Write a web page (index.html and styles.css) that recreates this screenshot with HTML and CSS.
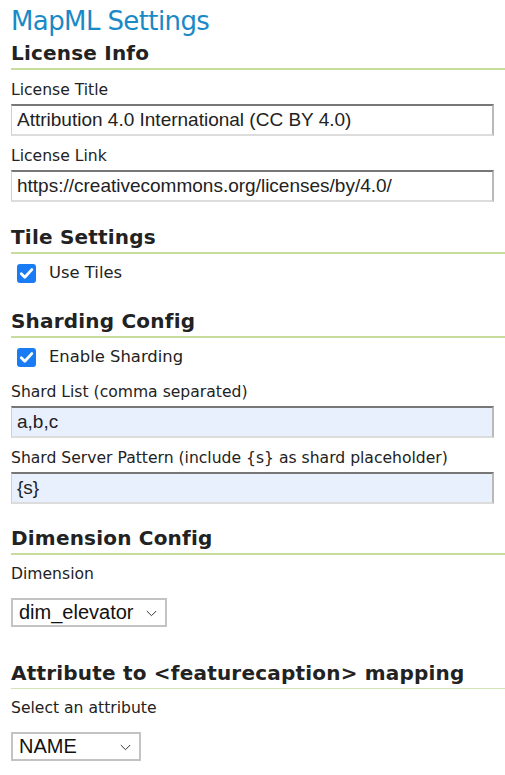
FILE: index.html
```html
<!DOCTYPE html>
<html lang="en">
<head>
<meta charset="utf-8">
<title>MapML Settings</title>
<link rel="stylesheet" href="styles.css">
</head>
<body>
<div class="page">
  <h1 class="title">MapML Settings</h1>

  <h2 class="section">License Info</h2>
  <label class="label">License Title</label>
  <input class="field" type="text" value="Attribution 4.0 International (CC BY 4.0)">
  <label class="label gap">License Link</label>
  <input class="field" type="text" value="https://creativecommons.org/licenses/by/4.0/">

  <h2 class="section sec-tile">Tile Settings</h2>
  <div class="check-row">
    <span class="check"><svg width="19" height="19" viewBox="0 0 19 19"><rect x="0" y="0" width="19" height="19" rx="3" fill="#1a7cf5"/><path d="M4.3 9.8 L7.8 13.3 L14.8 5.6" fill="none" stroke="#fff" stroke-width="2.8" stroke-linecap="round" stroke-linejoin="round"/></svg></span>
    <span class="check-text">Use Tiles</span>
  </div>

  <h2 class="section sec-shard">Sharding Config</h2>
  <div class="check-row">
    <span class="check"><svg width="19" height="19" viewBox="0 0 19 19"><rect x="0" y="0" width="19" height="19" rx="3" fill="#1a7cf5"/><path d="M4.3 9.8 L7.8 13.3 L14.8 5.6" fill="none" stroke="#fff" stroke-width="2.8" stroke-linecap="round" stroke-linejoin="round"/></svg></span>
    <span class="check-text">Enable Sharding</span>
  </div>
  <label class="label after-check">Shard List (comma separated)</label>
  <input class="field filled" type="text" value="a,b,c">
  <label class="label gap">Shard Server Pattern (include {s} as shard placeholder)</label>
  <input class="field filled" type="text" value="{s}">

  <h2 class="section sec-dim">Dimension Config</h2>
  <label class="label sel-label">Dimension</label>
  <div class="select select-dim">
    <span class="select-value">dim_elevator</span>
    <svg class="chev" width="11" height="7" viewBox="0 0 11 7"><path d="M0.8 1 L5.5 5.7 L10.2 1" fill="none" stroke="#333" stroke-width="1"/></svg>
  </div>

  <h2 class="section sec-attr">Attribute to &lt;featurecaption&gt; mapping</h2>
  <label class="label sel-label">Select an attribute</label>
  <div class="select select-attr">
    <span class="select-value">NAME</span>
    <svg class="chev" width="11" height="7" viewBox="0 0 11 7"><path d="M0.8 1 L5.5 5.7 L10.2 1" fill="none" stroke="#333" stroke-width="1"/></svg>
  </div>
</div>
</body>
</html>
```

FILE: styles.css
```css
html, body {
  margin: 0;
  padding: 0;
  background: #ffffff;
}

.page {
  padding: 6px 11px 0 11px;
  font-family: "DejaVu Sans", Verdana, sans-serif;
  color: #222222;
  overflow: hidden;
}

.title {
  margin: 0;
  font-size: 26px;
  line-height: 30px;
  font-weight: normal;
  letter-spacing: -0.6px;
  color: #1a8ac6;
}

.section {
  margin: 5px -11px 0 0;
  padding: 0 0 3px 0;
  font-size: 20px;
  line-height: 24px;
  font-weight: bold;
  letter-spacing: 0.2px;
  color: #222222;
  border-bottom: 2px solid #c8dc9c;
}

.sec-tile { margin-top: 23px; }
.sec-shard { margin-top: 26px; }
.sec-dim { margin-top: 22px; }
.sec-attr {
  margin-top: 34px;
  padding-bottom: 3px;
  border-bottom: 1px solid #d3e3b8;
}

.label {
  display: block;
  margin: 11px 0 5px 0;
  font-size: 15.6px;
  line-height: 18px;
  color: #222222;
}

.label.gap { margin-top: 11px; }
.label.after-check { margin-top: 16px; }
.label.sel-label { margin-top: 10px; margin-bottom: 15px; }

.field {
  display: block;
  box-sizing: border-box;
  width: 100%;
  height: 32px;
  margin: 0;
  padding: 0 5px;
  font-family: "Liberation Sans", Arial, sans-serif;
  font-size: 19px;
  color: #222222;
  background: #ffffff;
  border-top: 2px solid #777777;
  border-left: 1px solid #cfcfcf;
  border-right: 2px solid #b9b9b9;
  border-bottom: 2px solid #dcdcdc;
  border-radius: 0;
  outline: none;
}

.field.filled {
  background: #e8f0fe;
}

.check-row {
  display: flex;
  align-items: center;
  height: 20px;
  margin-top: 9px;
  padding-left: 6px;
}

.check {
  display: flex;
  width: 19px;
  height: 19px;
}

.check-text {
  margin-left: 13px;
  font-size: 16.4px;
  line-height: 18px;
}

.select {
  display: flex;
  align-items: center;
  box-sizing: border-box;
  height: 29px;
  border: 2px solid #c3c3c3;
  padding: 0 8px 0 6px;
  font-family: "Liberation Sans", Arial, sans-serif;
  font-size: 20px;
  color: #111111;
}

.select-dim { width: 156px; }
.select-attr { width: 130px; }

.select-value {
  flex: 1;
  white-space: nowrap;
}

.chev {
  flex: none;
  margin-top: 1px;
}
```
